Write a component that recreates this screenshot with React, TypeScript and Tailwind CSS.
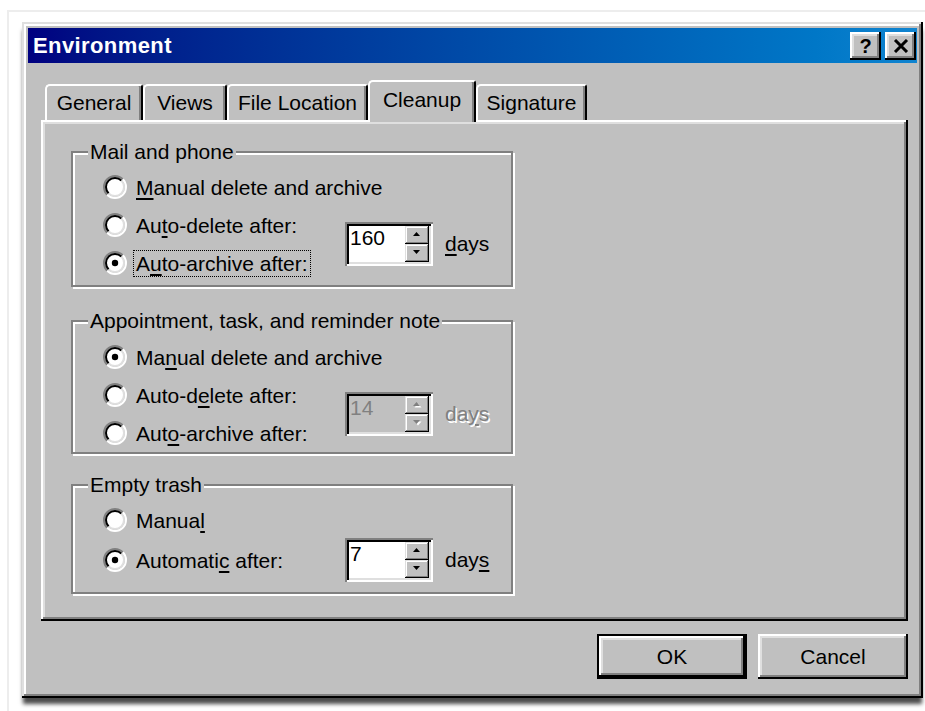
import React from "react";

// Win98-style bevels, two 2px rings each
const RAISED =
  "shadow-[inset_-2px_-2px_0_#000,inset_2px_2px_0_#fff,inset_-4px_-4px_0_#808080,inset_4px_4px_0_#dfdfdf]";
const FRAME =
  "shadow-[inset_-2px_-2px_0_#000,inset_2px_2px_0_#dfdfdf,inset_-4px_-4px_0_#808080,inset_4px_4px_0_#fff,0_7px_4px_-1px_rgba(0,0,0,0.7)]";
const SUNKEN =
  "shadow-[inset_2px_2px_0_#808080,inset_-2px_-2px_0_#fff,inset_4px_4px_0_#000,inset_-4px_-4px_0_#dfdfdf]";
const SPIN_BTN =
  "shadow-[inset_-1px_-1px_0_#000,inset_1px_1px_0_#dfdfdf,inset_-2px_-2px_0_#808080,inset_2px_2px_0_#fff]";

// label with an underlined access key
function Mn({ text, at }: { text: string; at: number }) {
  return (
    <>
      {text.slice(0, at)}
      <u className="underline decoration-[1.5px] underline-offset-[3px]">{text[at]}</u>
      {text.slice(at + 1)}
    </>
  );
}

function Radio({ checked }: { checked?: boolean }) {
  const d = 11 / Math.SQRT2;
  const d2 = 9 / Math.SQRT2;
  return (
    <svg width="24" height="24" viewBox="0 0 24 24" className="shrink-0">
      <circle cx="12" cy="12" r="9" fill="#fff" />
      <path d={`M${12 - d} ${12 + d} A11 11 0 0 1 ${12 + d} ${12 - d}`} stroke="#808080" strokeWidth="2" fill="none" />
      <path d={`M${12 + d} ${12 - d} A11 11 0 0 1 ${12 - d} ${12 + d}`} stroke="#fff" strokeWidth="2" fill="none" />
      <path d={`M${12 - d2} ${12 + d2} A9 9 0 0 1 ${12 + d2} ${12 - d2}`} stroke="#000" strokeWidth="2" fill="none" />
      <path d={`M${12 + d2} ${12 - d2} A9 9 0 0 1 ${12 - d2} ${12 + d2}`} stroke="#dfdfdf" strokeWidth="2" fill="none" />
      {checked && <circle cx="12" cy="12" r="3.2" fill="#000" />}
    </svg>
  );
}

function Option({
  checked,
  focused,
  h = "h-[38px]",
  children,
}: {
  checked?: boolean;
  focused?: boolean;
  h?: string;
  children: React.ReactNode;
}) {
  return (
    <div className={`flex items-center gap-[6px] ${h}`}>
      <Radio checked={checked} />
      <span
        className={`border px-[2px] leading-[25px] whitespace-nowrap ${
          focused ? "border-dotted border-black" : "border-transparent"
        }`}
      >
        {children}
      </span>
    </div>
  );
}

function Arrow({ up, disabled }: { up?: boolean; disabled?: boolean }) {
  const pts = up ? "3.5,0 7,4 0,4" : "0,0 7,0 3.5,4";
  return (
    <svg width="9" height="6" viewBox="0 0 9 6">
      {disabled && <polygon points={pts} fill="#fff" transform="translate(1.5 1.5)" />}
      <polygon points={pts} fill={disabled ? "#808080" : "#000"} />
    </svg>
  );
}

function SpinBox({ value, disabled }: { value: string; disabled?: boolean }) {
  return (
    <div className={`flex w-[88px] h-[44px] p-[4px] shrink-0 ${SUNKEN} ${disabled ? "bg-[#c0c0c0]" : "bg-white"}`}>
      <div className={`flex-1 pl-[1px] leading-[24px] ${disabled ? "text-[#808080]" : "text-black"}`}>{value}</div>
      <div className="flex flex-col w-[24px]">
        <div className={`flex-1 flex items-center justify-center bg-[#c0c0c0] ${SPIN_BTN}`}>
          <Arrow up disabled={disabled} />
        </div>
        <div className={`flex-1 flex items-center justify-center bg-[#c0c0c0] ${SPIN_BTN}`}>
          <Arrow disabled={disabled} />
        </div>
      </div>
    </div>
  );
}

function Days({ disabled, children }: { disabled?: boolean; children: React.ReactNode }) {
  return (
    <span
      className={`ml-[12px] leading-[24px] ${
        disabled ? "text-[#808080] [text-shadow:1.5px_1.5px_0_#fff]" : "text-black"
      }`}
    >
      {children}
    </span>
  );
}

function GroupBox({ title, className, children }: { title: string; className: string; children: React.ReactNode }) {
  return (
    <div
      className={`relative w-[442px] border-2 border-[#808080] shadow-[inset_2px_2px_0_#fff,2px_2px_0_#fff] pl-[30px] ${className}`}
    >
      <span className="absolute -top-[13px] left-[15px] bg-[#c0c0c0] px-[2px] leading-[24px] whitespace-nowrap">
        {title}
      </span>
      {children}
    </div>
  );
}

function Tab({ label, width, selected }: { label: string; width: string; selected?: boolean }) {
  return (
    <div
      className={`flex items-center justify-center bg-[#c0c0c0] border-l-2 border-t-2 border-white rounded-tl-[5px] rounded-tr-[3px] border-r-2 border-r-black shadow-[inset_-2px_0_0_#808080] ${width} ${
        selected ? "relative z-10 h-[42px] -mb-[2px] pb-[4px]" : "h-[36px]"
      }`}
    >
      {label}
    </div>
  );
}

function CaptionButton({ children }: { children: React.ReactNode }) {
  return (
    <div className={`w-[31px] h-[28px] flex items-center justify-center bg-[#c0c0c0] ${RAISED}`}>{children}</div>
  );
}

export default function App() {
  return (
    <div className="w-[925px] h-[711px] bg-white overflow-hidden font-['Liberation_Sans',Arial,sans-serif] text-[21px] text-black">
      <div className="ml-[7px] mt-[10px] h-[701px] border-l-2 border-t-2 border-[#ededed]">
        <div className={`ml-[13px] mt-[10px] w-[901px] h-[676px] bg-[#c0c0c0] p-[6px] flex flex-col ${FRAME}`}>
          {/* caption */}
          <div className="h-[35px] flex items-center justify-between pl-[5px] pr-[1px] bg-gradient-to-r from-[#000080] to-[#1084d0]">
            <span className="text-white font-bold text-[22px] tracking-[0.4px]">Environment</span>
            <div className="flex gap-[4px]">
              <CaptionButton>
                <span className="font-bold text-[20px] leading-none pt-[1px]">?</span>
              </CaptionButton>
              <CaptionButton>
                <svg width="16" height="14" viewBox="0 0 16 14">
                  <path d="M2 1 L14 13 M14 1 L2 13" stroke="#000" strokeWidth="3" />
                </svg>
              </CaptionButton>
            </div>
          </div>

          {/* tabs */}
          <div className="mt-[17px] ml-[17px] h-[40px] flex items-end">
            <Tab label="General" width="w-[98px]" />
            <Tab label="Views" width="w-[84px]" />
            <Tab label="File Location" width="w-[141px]" />
            <Tab label="Cleanup" width="w-[108px]" selected />
            <Tab label="Signature" width="w-[111px]" />
          </div>

          {/* tab page */}
          <div className={`ml-[13px] w-[867px] h-[501px] pt-[31px] pl-[30px] ${RAISED}`}>
            <GroupBox title="Mail and phone" className="h-[136px] pt-[15px]">
              <Option>
                <Mn text="Manual delete and archive" at={0} />
              </Option>
              <div className="flex items-center">
                <div className="w-[242px] flex flex-col">
                  <Option>
                    <Mn text="Auto-delete after:" at={2} />
                  </Option>
                  <Option checked focused>
                    <Mn text="Auto-archive after:" at={1} />
                  </Option>
                </div>
                <SpinBox value="160" />
                <Days>
                  <Mn text="days" at={0} />
                </Days>
              </div>
            </GroupBox>

            <GroupBox title="Appointment, task, and reminder note" className="mt-[33px] h-[134px] pt-[16px]">
              <Option checked>
                <Mn text="Manual delete and archive" at={2} />
              </Option>
              <div className="flex items-center">
                <div className="w-[242px] flex flex-col">
                  <Option>
                    <Mn text="Auto-delete after:" at={6} />
                  </Option>
                  <Option>
                    <Mn text="Auto-archive after:" at={3} />
                  </Option>
                </div>
                <SpinBox value="14" disabled />
                <Days disabled>
                  <Mn text="days" at={2} />
                </Days>
              </div>
            </GroupBox>

            <GroupBox title="Empty trash" className="mt-[30px] h-[110px] pt-[14px]">
              <Option h="h-[40px]">
                <Mn text="Manual" at={5} />
              </Option>
              <div className="flex items-center h-[40px]">
                <div className="w-[242px]">
                  <Option checked h="h-[40px]">
                    <Mn text="Automatic after:" at={8} />
                  </Option>
                </div>
                <SpinBox value="7" />
                <Days>
                  <Mn text="days" at={3} />
                </Days>
              </div>
            </GroupBox>
          </div>

          {/* dialog buttons */}
          <div className="mt-[13px] pr-[9px] flex justify-end gap-[11px]">
            <div className="w-[150px] h-[45px] border-2 border-black">
              <div className={`w-full h-full flex items-center justify-center bg-[#c0c0c0] ${RAISED}`}>OK</div>
            </div>
            <div className={`w-[150px] h-[45px] flex items-center justify-center bg-[#c0c0c0] ${RAISED}`}>Cancel</div>
          </div>
        </div>
      </div>
    </div>
  );
}
